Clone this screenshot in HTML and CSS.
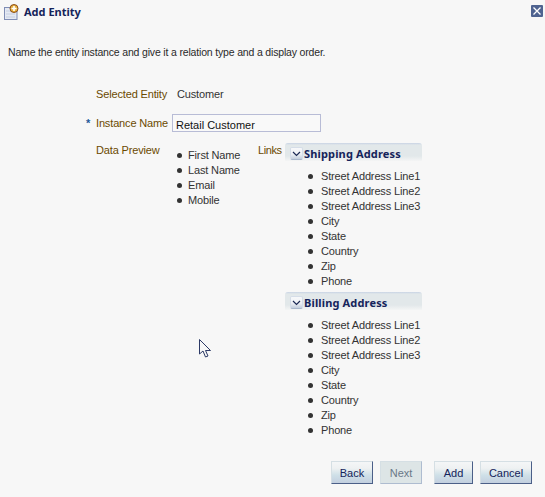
FILE: index.html
```html
<!DOCTYPE html>
<html lang="en">
<head>
<meta charset="utf-8">
<title>Add Entity</title>
<link rel="stylesheet" href="styles.css">
</head>
<body>
<div class="dialog">
  <header class="titlebar">
    <div class="title-left">
      <svg class="title-icon" width="16" height="16" viewBox="0 0 16 16">
        <rect x="0.500" y="3.500" width="12.500" height="12" fill="#e4e9f3" stroke="#7f8db5"/>
        <path d="M2 7h9M2 10h9M2 13h9" stroke="#c4cde0"/>
        <circle cx="10" cy="4.500" r="4" fill="#e9b23c" stroke="#8a4d1c"/>
        <path d="M10 2v5M7.500 4.500h5" stroke="#fff" stroke-width="1.600"/>
      </svg>
      <h1 class="title">Add Entity</h1>
    </div>
    <button class="close" aria-label="Close">
      <svg width="12" height="12" viewBox="0 0 12 12">
        <rect width="12" height="12" rx="1" fill="#4f6390"/>
        <path d="M2.500 2.500l7 7M9.500 2.500l-7 7" stroke="#fff" stroke-width="1.300"/>
      </svg>
    </button>
  </header>
  <p class="intro">Name the entity instance and give it a relation type and a display order.</p>
  <div class="form">
    <div class="row row-selected">
      <span class="label">Selected Entity</span>
      <span class="value">Customer</span>
    </div>
    <div class="row row-name">
      <span class="label"><span class="req">*</span>Instance Name</span>
      <input class="input" type="text" value="Retail Customer">
    </div>
    <div class="row row-preview">
      <span class="label">Data Preview</span>
      <ul class="list preview-list">
        <li>First Name</li><li>Last Name</li><li>Email</li><li>Mobile</li>
      </ul>
      <span class="links-label">Links</span>
      <div class="links">
        <section class="panel">
          <h2 class="panel-head">
            <span class="toggle"><svg width="9" height="6" viewBox="0 0 9 6"><path d="M1 1l3.500 3.500L8 1" fill="none" stroke="#1c2a55" stroke-width="1.200"/></svg></span>
            Shipping Address
          </h2>
          <ul class="list panel-list">
            <li>Street Address Line1</li><li>Street Address Line2</li><li>Street Address Line3</li><li>City</li><li>State</li><li>Country</li><li>Zip</li><li>Phone</li>
          </ul>
        </section>
        <section class="panel">
          <h2 class="panel-head">
            <span class="toggle"><svg width="9" height="6" viewBox="0 0 9 6"><path d="M1 1l3.500 3.500L8 1" fill="none" stroke="#1c2a55" stroke-width="1.200"/></svg></span>
            Billing Address
          </h2>
          <ul class="list panel-list">
            <li>Street Address Line1</li><li>Street Address Line2</li><li>Street Address Line3</li><li>City</li><li>State</li><li>Country</li><li>Zip</li><li>Phone</li>
          </ul>
        </section>
      </div>
    </div>
  </div>
  <footer class="actions">
    <div class="nav-group">
      <button class="btn">Back</button>
      <button class="btn btn-disabled" disabled>Next</button>
    </div>
    <div class="nav-group">
      <button class="btn">Add</button>
      <button class="btn">Cancel</button>
    </div>
  </footer>
  <svg class="cursor" width="13" height="20" viewBox="0 0 13 20">
    <path d="M0.500 0.500V15l3.500-3 2.500 6 2.500-1-2.500-5.500h5z" fill="#f7f7f7" stroke="#2c3a66"/>
  </svg>
</div>
</body>
</html>
```
FILE: styles.css
```css
* { box-sizing: border-box; }
html, body { margin: 0; padding: 0; }
body {
  width: 545px;
  height: 497px;
  background: #f7f7f7;
  font-family: "Liberation Sans", Arial, sans-serif;
  font-size: 11px;
  letter-spacing: -0.15px;
  color: #333;
  overflow: hidden;
}
.dialog { position: relative; width: 545px; height: 497px; }
.titlebar {
  display: flex;
  justify-content: space-between;
  align-items: flex-start;
  padding: 4px 2px 0 4px;
}
.title-left { display: flex; align-items: center; gap: 4px; }
.title { margin: -1px 0 0; font-family: "Noto Sans", sans-serif; font-size: 11px; letter-spacing: 0; font-weight: bold; color: #14235a; line-height: 15px; }
.close { border: 0; padding: 0; margin: 1px 0 3px; background: none; display: flex; }
.intro { margin: 26px 0 0 8px; color: #2a2a2a; font-size: 10.500px; letter-spacing: -0.17px; line-height: 13px; white-space: nowrap; }
.form { margin-top: 28px; }
.row { display: flex; }
.label { color: #6b4a00; white-space: nowrap; }
.row-selected { padding-left: 96px; height: 14px; align-items: center; }
.row-selected .label { width: 81px; }
.row-name { margin-top: 12px; padding-left: 86px; height: 19px; align-items: flex-end; }
.row-name .label { width: 86px; line-height: 17px; }
.req { color: #1c5a9a; font-weight: bold; display: inline-block; width: 10px; }
.input {
  width: 149px;
  height: 18px;
  border: 1px solid #b8bcd6;
  background: #f9f9f9;
  font: inherit;
  color: #111;
  padding: 3px 3px 0;
}
.row-preview { margin-top: 11px; padding-left: 96px; }
.row-preview > .label { width: 81px; line-height: 15px; }
.list { list-style: none; margin: 0; padding: 0; white-space: nowrap; }
.list li { height: 15px; line-height: 15px; position: relative; padding-left: 13px; }
.list li::before {
  content: "";
  position: absolute;
  left: 0;
  top: 5px;
  width: 5px;
  height: 5px;
  border-radius: 50%;
  background: #333;
}
.preview-list { width: 81px; margin-top: 5px; }
.preview-list li { padding-left: 11px; }
.links-label { color: #6b4a00; width: 27px; line-height: 15px; letter-spacing: -0.4px; }
.links { width: 137px; }
.panel-head {
  margin: 0;
  height: 18px;
  display: flex;
  align-items: center;
  gap: 1px;
  font-family: "Noto Sans", sans-serif;
  font-size: 11px;
  letter-spacing: 0.15px;
  font-weight: bold;
  color: #14235a;
  background: linear-gradient(#c8d3e4 0, #e2e8ea 2px, #e2e8ea 13px, #f4f5f5 100%);
  border-radius: 3px 3px 0 0;
  padding-left: 5px;
  padding-top: 3px;
}
.toggle {
  width: 13px;
  height: 13px;
  display: flex;
  align-items: center;
  justify-content: center;
  background: linear-gradient(#f7f8fa, #eef1f5 55%, #c3cedd);
  border: 1px solid #d5dde8;
  border-bottom-color: #aab8cc;
  border-radius: 2px;
}
.panel-list { padding: 8px 0 3px 23px; }
.actions {
  position: absolute;
  left: 331px;
  top: 461px;
  display: flex;
  gap: 12px;
}
.nav-group { display: flex; gap: 7px; }
.btn {
  width: 42px;
  height: 23px;
  font: inherit;
  color: #14235a;
  padding: 0;
  background: linear-gradient(#f4f6f7 0, #eef1f2 30%, #cfe0e8 62%, #c3cfdf 100%);
  border: 1px solid;
  border-color: #d5dfe4 #4b5f88 #4b5f88 #d5dfe4;
}
.nav-group:last-child .btn:first-child { width: 39px; }
.nav-group:last-child .btn:last-child { width: 52px; }
.btn-disabled {
  background: #dde5e6;
  color: #6a7888;
  border-color: #d5dfe4 #aebcd0 #aebcd0 #d5dfe4;
}
.cursor { position: absolute; left: 199px; top: 339px; }
```
